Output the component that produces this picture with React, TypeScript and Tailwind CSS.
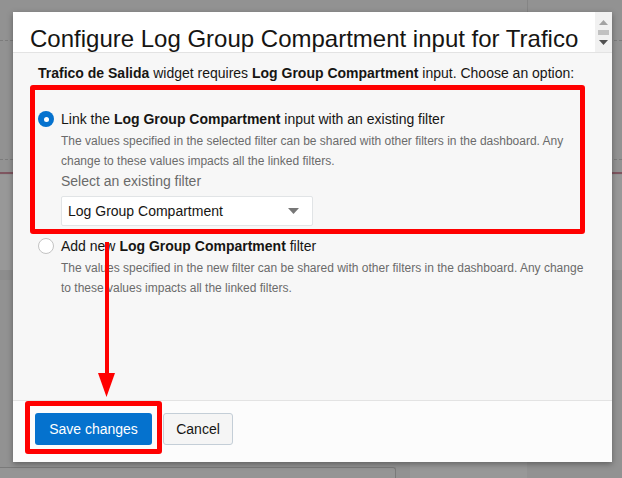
import React from 'react';

const Radio: React.FC<{ checked?: boolean }> = ({ checked }) =>
  checked ? (
    <span className="flex h-[16px] w-[16px] shrink-0 items-center justify-center rounded-full bg-[#0572ce]">
      <span className="h-[5px] w-[5px] rounded-full bg-white" />
    </span>
  ) : (
    <span className="h-[16px] w-[16px] shrink-0 rounded-full border border-[#c3c3c3] bg-white" />
  );

const App: React.FC = () => {
  return (
    <div
      className="relative h-[478px] w-[622px] overflow-hidden bg-[#929292] pl-[13px] pt-[12px]"
      style={{ fontFamily: '"Liberation Sans", Arial, sans-serif' }}
    >
      {/* dimmed page behind the dialog */}
      <div className="absolute left-0 top-[40px] w-full border-t border-dashed border-[#7c7c7c]" />
      <div className="absolute left-0 top-[159px] w-full border-t border-dashed border-[#7c7c7c]" />
      <div className="absolute left-0 top-[172px] h-[2px] w-full bg-[#7f5660]" />
      <div className="absolute left-0 top-[175px] h-[95px] w-full bg-[#989898]" />
      <div className="absolute left-0 top-[270px] h-[10px] w-full bg-[#8d8d8d]" />
      <div className="absolute left-[527px] top-0 h-[12px] border-l border-[#858585]" />
      <div className="absolute left-0 top-[467px] h-[20px] w-[396px] rounded-tr-[3px] border-r border-t border-[#7a7a7a] bg-[#959595]" />
      <div className="absolute left-[410px] top-[462px] h-[16px] w-[117px] bg-[#989898]" />

      {/* dialog */}
      <div className="relative flex h-[450px] w-[599px] flex-col bg-white shadow-[0_2px_6px_rgba(0,0,0,0.35)]">
        <div className="flex h-[41px] shrink-0 border-b border-[#e3e3e3] bg-white">
          <div className="flex-1 overflow-hidden pl-[17px] pt-[13px]">
            <h1 className="whitespace-nowrap text-[24px] leading-[28px] text-[#161513]">
              Configure Log Group Compartment input for Trafico
            </h1>
          </div>
          <div className="flex w-[17px] flex-col items-center bg-[#f1f1f1] pt-[8px]">
            <svg width="9" height="5" viewBox="0 0 9 5">
              <path d="M0 5 L4.5 0 L9 5 Z" fill="#a3a3a3" />
            </svg>
            <div className="mt-[5px] h-[5px] w-[11px] bg-[#c1c1c1]" />
            <svg className="mt-[5px]" width="9" height="5" viewBox="0 0 9 5">
              <path d="M0 0 L9 0 L4.5 5 Z" fill="#505050" />
            </svg>
          </div>
        </div>

        <div className="flex-1 bg-[#f7f7f7] pl-[25px] pt-[10px] text-[14px] leading-[20px] text-[#161513]">
          <p>
            <b>Trafico de Salida</b> widget requires <b>Log Group Compartment</b> input. Choose an option:
          </p>

          <div className="mt-[26px] flex items-center gap-[7px]">
            <Radio checked />
            <span>
              Link the <b>Log Group Compartment</b> input with an existing filter
            </span>
          </div>
          <div className="pl-[23px]">
            <p className="mt-[2px] whitespace-nowrap text-[12px] leading-[20px] text-[#6b6b6b]">
              The values specified in the selected filter can be shared with other filters in the dashboard. Any
              <br />
              change to these values impacts all the linked filters.
            </p>
            <p className="text-[#6a6a6a]">Select an existing filter</p>
            <div className="mt-[5px] flex h-[30px] w-[252px] items-center justify-between rounded-[2px] border border-[#e1e4e6] bg-white pl-[6px] pr-[13px]">
              <span className="text-[#161513]">Log Group Compartment</span>
              <svg width="11" height="6" viewBox="0 0 11 6">
                <path d="M0 0 L11 0 L5.5 6 Z" fill="#777777" />
              </svg>
            </div>
          </div>

          <div className="mt-[10px] flex items-center gap-[7px]">
            <Radio />
            <span>
              Add new <b>Log Group Compartment</b> filter
            </span>
          </div>
          <p className="mt-[2px] whitespace-nowrap pl-[23px] text-[12px] leading-[20px] text-[#6b6b6b]">
            The values specified in the new filter can be shared with other filters in the dashboard. Any change
            <br />
            to these values impacts all the linked filters.
          </p>
        </div>

        <div className="flex h-[62px] shrink-0 gap-[11px] border-t border-[#e3e3e3] bg-[#fcfcfc] pl-[22px] pt-[12px]">
          <button className="h-[32px] w-[117px] rounded-[3px] bg-[#0572ce] text-[14px] text-white">
            Save changes
          </button>
          <button className="h-[32px] w-[70px] rounded-[3px] border border-[#c4ced7] bg-[#f5f5f5] text-[14px] text-[#161513]">
            Cancel
          </button>
        </div>
      </div>

      {/* annotations */}
      <div className="pointer-events-none absolute left-[30px] top-[85px] h-[149px] w-[555px] rounded-[3px] border-[5px] border-[#ff0000]" />
      <div className="pointer-events-none absolute left-[25px] top-[401px] h-[53px] w-[137px] rounded-[3px] border-[5px] border-[#ff0000]" />
      <svg className="pointer-events-none absolute left-[96px] top-[242px]" width="22" height="158" viewBox="0 0 22 158">
        <rect x="9" y="0" width="4" height="134" fill="#ff0000" />
        <path d="M2 131 L19 131 L10.5 155 Z" fill="#ff0000" />
      </svg>
    </div>
  );
};

export default App;
